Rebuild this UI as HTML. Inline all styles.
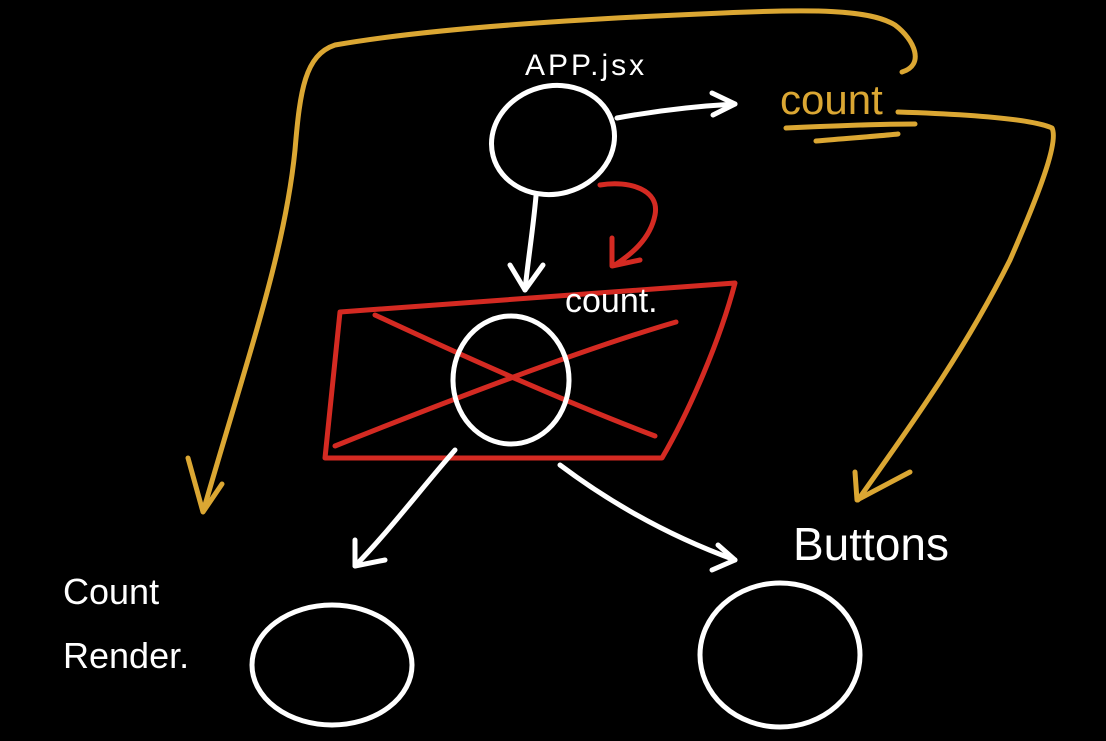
<!DOCTYPE html>
<html><head><meta charset="utf-8"><style>
html,body{margin:0;padding:0;background:#000;width:1106px;height:741px;overflow:hidden}
svg{display:block}
text{font-family:"Liberation Sans Narrow","Liberation Sans",sans-serif}
</style></head><body>
<svg width="1106" height="741" viewBox="0 0 1106 741" fill="none" stroke-linecap="round" stroke-linejoin="round">
<!-- gold -->
<g stroke="#dba733" stroke-width="5">
<path d="M902,72 C925,65 915,40 895,25 C870,10 820,8 700,14 C560,20 420,30 335,45 C305,55 300,90 295,150 C285,250 250,350 205,505"/>
<path d="M188,458 L203,512 L222,484"/>
<path d="M786,128 C830,126 880,124 915,124"/>
<path d="M816,141 C850,138 880,136 898,134"/>
<path d="M898,112 C960,114 1030,118 1052,128 C1058,140 1045,180 1010,260 C960,360 900,440 858,500"/>
<path d="M855,472 L857,500 L910,472"/>
</g>
<text x="780" y="114" font-size="42" fill="#dba733">count</text>
<!-- red -->
<g stroke="#d42a22" stroke-width="5">
<path d="M600,185 C630,180 660,190 655,215 C650,240 630,255 615,265"/>
<path d="M612,238 L612,266 L640,260"/>
<path d="M340,312 L735,283 C720,340 690,410 662,458 L325,458 Z"/>
<path d="M375,315 C450,350 560,400 655,436"/>
<path d="M335,446 C450,400 580,350 676,322"/>
</g>
<!-- white -->
<g stroke="#fff" stroke-width="5">
<ellipse cx="553" cy="140" rx="62" ry="54" transform="rotate(-15 553 140)"/>
<path d="M617,118 C660,110 700,106 735,104"/>
<path d="M712,93 L735,104 L713,115"/>
<path d="M536,196 C533,230 528,260 525,290"/>
<path d="M510,265 L525,290 L543,265"/>
<ellipse cx="511" cy="380" rx="58" ry="64"/>
<path d="M455,450 C420,490 390,530 355,566"/>
<path d="M355,540 L355,566 L385,560"/>
<path d="M560,465 C620,510 680,540 735,560"/>
<path d="M718,545 L735,560 L712,570"/>
<ellipse cx="332" cy="665" rx="80" ry="60"/>
<ellipse cx="780" cy="655" rx="80" ry="72"/>
</g>
<g fill="#fff">
<text x="525" y="75" font-size="30" letter-spacing="3">APP.jsx</text>
<text x="565" y="312" font-size="34">count.</text>
<text x="793" y="560" font-size="46">Buttons</text>
<text x="63" y="604" font-size="36">Count</text>
<text x="63" y="668" font-size="36">Render.</text>
</g>
</svg>
</body></html>
